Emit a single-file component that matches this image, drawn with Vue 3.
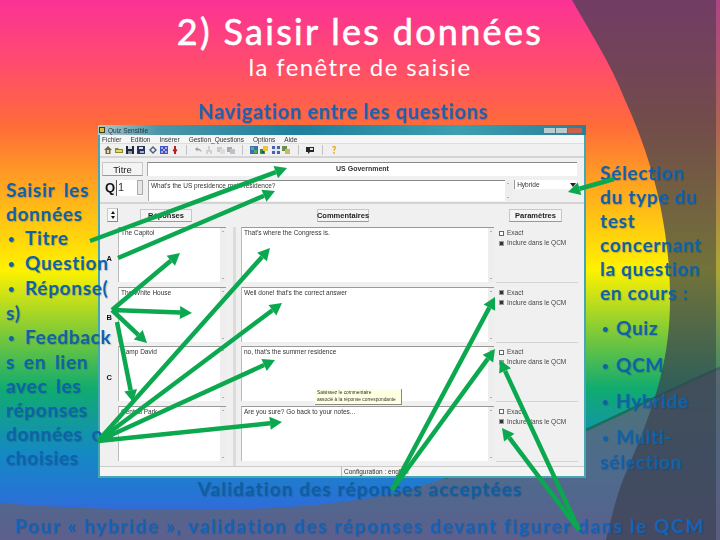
<script setup>
const rows = [
  { letter: 'A', answer: 'The Capitol', comment: "That's where the Congress is.", exact: false, qcm: 'on' },
  { letter: 'B', answer: 'The White House', comment: "Well done! that's the correct answer", exact: true, qcm: 'on' },
  { letter: 'C', answer: 'Camp David', comment: "no, that's the summer residence", exact: false, qcm: 'grey' },
  { letter: '', answer: 'Central Park', comment: 'Are you sure? Go back to your notes...', exact: false, qcm: 'on' }
]
const menu = ['Fichier', 'Edition', 'Insérer', 'Gestion_Questions', 'Options', 'Aide']
const tools = [
  { parts: [['M4 0L8 4H6.5V8H1.5V4H0Z', '#6f6a45'], ['M3 4H5V7H3Z', '#e8dca0']], gap: 3 },
  { parts: [['M0 2H3L4 3H8V7H0Z', '#8a8a30'], ['M1 4H7V6H1Z', '#e6d860']], gap: 3 },
  { parts: [['M0 0H8V8H0Z', '#20283c'], ['M2 0H6V3H2Z', '#dfe3ea'], ['M2 5H6V8H2Z', '#8a92a6']], gap: 3 },
  { parts: [['M0 0H8V8H0Z', '#28345e'], ['M2 1H6V3H2Z', '#dfe3ea'], ['M3 5H7V7H3Z', '#a4b0d8']], gap: 4 },
  { parts: [['M4 0L8 4L4 8L0 4Z', '#55607a'], ['M4 2L6 4L4 6L2 4Z', '#f0f0f0']], gap: 3 },
  { parts: [['M0 0H8V8H0Z', '#3f56c0'], ['M1 1H3V3H1ZM5 1H7V3H5ZM3 3H5V5H3ZM1 5H3V7H1ZM5 5H7V7H5Z', '#b0a8e0']], gap: 3 },
  { parts: [['M3 0H5V3L6.5 4L5 6V8H3V6L1.5 4L3 3Z', '#b8201c']], gap: 7, sep: true },
  { parts: [['M1 3L3.5 1V2.4C6 2.4 7.5 3.6 7.5 6.5C6.6 4.8 5.4 4 3.5 4V5.4Z', '#9a9ea6']], gap: 3 },
  { parts: [['M3 0H5V4H7V8H5V6H3V8H1V4H3Z', '#d0d2d6']], gap: 4 },
  { parts: [['M0 1H5V6H0Z', '#c8cacd'], ['M3 3H8V8H3Z', '#dcdde0']], gap: 2 },
  { parts: [['M0 1H5V6H0Z', '#a6a9ad'], ['M3 3H8V8H3Z', '#bdc0c4']], gap: 7, sep: true },
  { parts: [['M0 0H8V8H0Z', '#3a6fb8'], ['M1 1H4V4H1Z', '#58b080'], ['M4 4H7V7H4Z', '#5aa860']], gap: 2 },
  { parts: [['M0 3H5V8H0Z', '#3a8c3c'], ['M3 0H8V5H3Z', '#e6c840'], ['M2 5H4V7H2Z', '#1e4a8c']], gap: 4 },
  { parts: [['M0 0H8V8H0Z', '#4664b0'], ['M3 0H5V8H3ZM0 3H8V5H0Z', '#dfe6f2']], gap: 2 },
  { parts: [['M0 0H5V5H0Z', '#6a8e4c'], ['M3 3H8V8H3Z', '#c8b868']], gap: 8, sep: true },
  { parts: [['M0 1H8V6H4L2 8V6H0Z', '#24262c'], ['M4 2H7V4H4Z', '#e4e4e4']], gap: 8, sep: true },
  { parts: [['M2 1.5C2 -0.5 6 -0.5 6 1.5C6 3.2 4.6 3.2 4.6 5H3.4C3.4 2.8 4.8 2.8 4.8 1.6C4.8 0.8 3.2 0.8 3.2 1.6ZM3.4 6H4.6V8H3.4Z', '#e8a010']], gap: 0 }
]
function arrow(x1, y1, x2, y2, head = 12, half = 6.5) {
  const d = Math.hypot(x2 - x1, y2 - y1)
  const ux = (x2 - x1) / d
  const uy = (y2 - y1) / d
  const bx = x2 - ux * head
  const by = y2 - uy * head
  const px = -uy * half
  const py = ux * half
  return {
    line: { x1, y1, x2: bx, y2: by },
    head: `${x2},${y2} ${bx + px},${by + py} ${bx - px},${by - py}`
  }
}
const arrows = [
  [90, 241, 287, 168], [118, 258, 275, 191], [112, 310, 180, 253], [112, 310, 192, 313], [112, 310, 147, 343],
  [117, 322, 133, 402], [98, 441, 270, 248], [98, 441, 282, 303], [98, 441, 275, 360], [98, 441, 282, 422],
  [614, 179, 568, 192], [392, 490, 495, 297], [392, 490, 495, 349], [579, 530, 500, 360], [579, 530, 502, 428]
].map((a) => arrow(...a))
</script>

<template>
  <div class="slide">
    <svg class="bg" viewBox="0 0 720 540" aria-hidden="true">
      <path d="M0 503 C90 510 170 511 250 509 C340 506 400 495 445 478 L586 430 C630 410 680 385 720 368 L720 540 L0 540 Z" fill="#5d6478" fill-opacity="0.78" />
      <path d="M445 478 L586 430 C630 410 680 385 720 368" fill="none" stroke="#17705c" stroke-width="2.5" />
      <path d="M572 0 C590 32 610 62 625 100 C650 155 668 215 670 290 C671 350 660 395 627 470 C618 490 612 515 606 540 L716 540 L716 0 Z" fill="#3c4150" fill-opacity="0.72" />
      <rect x="716" y="0" width="4" height="540" fill="#5a5a70" fill-opacity="0.5" />
    </svg>

    <header class="head">
      <h1>2) Saisir les données</h1>
      <h2>la fenêtre de saisie</h2>
      <p class="nav-label blue">Navigation entre les questions</p>
    </header>

    <main class="middle">
      <div class="left blue">
        <p>Saisir les<br />données</p>
        <p><span class="dot">•</span>Titre</p>
        <p><span class="dot">•</span>Question</p>
        <p><span class="dot">•</span>Réponse(<br />s)</p>
        <p><span class="dot">•</span>Feedback<br />s en lien<br />avec les<br />réponses<br />données ou<br />choisies</p>
      </div>

      <section class="win">
        <div class="titlebar">
          <span class="app-icon"></span>
          <span class="win-name">Quiz Sensible</span>
          <span class="win-ctrl"><i></i><i></i><i class="close"></i></span>
        </div>
        <div class="menu"><span v-for="m in menu" :key="m">{{ m }}</span></div>
        <div class="toolbar">
          <template v-for="(t, i) in tools" :key="i">
            <svg class="tool" viewBox="0 0 8 8" :style="{ marginRight: t.gap + 'px' }" aria-hidden="true">
              <path v-for="p in t.parts" :key="p[0]" :d="p[0]" :fill="p[1]" />
            </svg>
            <span v-if="t.sep" class="tool-sep"></span>
          </template>
        </div>

        <div class="meta">
          <div class="meta-row">
            <span class="tab titre">Titre</span>
            <div class="field title-field">US Government</div>
          </div>
          <div class="meta-row q-row">
            <span class="q">Q</span>
            <span class="spin"><span>1</span><i class="spin-btn"></i></span>
            <div class="field q-field">What's the US presidence main residence?</div>
            <span class="sb q-sb"></span>
            <div class="select">Hybride<b></b></div>
          </div>
        </div>

        <div class="tabs">
          <span class="updown"><i class="up"></i><i class="down"></i></span>
          <span class="tab t-rep">Réponses</span>
          <span class="tab t-com">Commentaires</span>
          <span class="tab t-par">Paramètres</span>
        </div>

        <div class="rows">
          <div v-for="r in rows" :key="r.answer" class="row">
            <span class="letter">{{ r.letter }}</span>
            <div class="box">{{ r.answer }}<span class="sb"></span></div>
            <span class="divider"></span>
            <div class="box">{{ r.comment }}<span class="sb"></span></div>
            <div class="params">
              <label><i class="check" :class="{ on: r.exact }"></i>Exact</label>
              <label><i class="check" :class="{ on: r.qcm === 'on', grey: r.qcm === 'grey' }"></i>Inclure dans le QCM</label>
            </div>
          </div>
          <div class="tip">Saisissez le commentaire<br />associé à la réponse correspondante</div>
        </div>

        <div class="status"><span>Configuration : english</span></div>
      </section>

      <div class="right blue">
        <p>Sélection<br />du type du<br />test<br />concernant<br />la question<br />en cours :</p>
        <p class="item"><span class="dot">•</span>Quiz</p>
        <p class="item"><span class="dot">•</span>QCM</p>
        <p class="item"><span class="dot">•</span>Hybride</p>
        <p class="item"><span class="dot">•</span>Multi-<br />sélection</p>
      </div>
    </main>

    <p class="validation blue">Validation des réponses acceptées</p>
    <p class="foot blue">Pour « hybride », validation des réponses devant figurer dans le QCM</p>

    <svg class="arrows" viewBox="0 0 720 540" aria-hidden="true">
      <g v-for="(a, i) in arrows" :key="i">
        <line v-bind="a.line" stroke="#0ba850" stroke-width="4.5" />
        <polygon :points="a.head" fill="#0ba850" />
      </g>
    </svg>
  </div>
</template>

<style>
html, body { margin: 0; }
</style>

<style scoped>
.slide {
  position: relative;
  width: 720px;
  height: 540px;
  overflow: hidden;
  display: flex;
  flex-direction: column;
  font-family: Lato, "Open Sans", sans-serif;
  background: linear-gradient(180deg, #fb3296 0%, #ff4a70 11%, #ff6a3a 23%, #ffae1c 36%, #fff200 50%, #86cc34 61%, #10ab70 72%, #1489c4 84%, #2a70d8 93%, #5a50d0 100%);
}
.bg, .arrows { position: absolute; inset: 0; width: 720px; height: 540px; }
.arrows { z-index: 5; pointer-events: none; }
.head, .middle, .validation, .foot { position: relative; }
p, h1, h2 { margin: 0; }
.blue {
  font-weight: 700;
  color: #0f62a8;
  text-shadow: 1px 1px 1px rgba(20, 50, 90, 0.25);
}
.dot { display: inline-block; font-size: 11px; vertical-align: 2px; }
.head { height: 125px; text-align: center; color: #fff; flex: none; }
h1 { padding-top: 9px; font-size: 36px; line-height: 44px; font-weight: 400; letter-spacing: 2.3px; -webkit-text-stroke: 0.6px #fff; }
h2 { font-size: 24px; line-height: 28px; font-weight: 400; letter-spacing: 1.4px; }
.nav-label { font-size: 20px; line-height: 24px; padding-top: 18px; padding-right: 34px; letter-spacing: 0.7px; color: #1e63b0; }

.middle { display: flex; height: 353px; flex: none; }
.left {
  width: 92px;
  margin-left: 6px;
  padding-top: 53px;
  position: relative;
  z-index: 3;
}
.left p, .right p { font-size: 19px; line-height: 24px; letter-spacing: 0.7px; white-space: nowrap; }
.left p { width: 108px; word-spacing: 3.5px; }
.left .dot { width: 19px; padding-left: 2px; box-sizing: border-box; }
.right { width: 108px; margin-left: 14px; padding-top: 36px; }
.right .item { margin-top: 11.3px; }
.right .dot { width: 16px; padding-left: 2px; box-sizing: border-box; }

.win {
  width: 488px;
  height: 353px;
  box-sizing: border-box;
  border: 2px solid #45a6b4;
  border-top: 0;
  background: #f0f0f0;
  font-family: "Liberation Sans", sans-serif;
  font-size: 6.5px;
  color: #333;
  display: flex;
  flex-direction: column;
  filter: blur(0.35px);
  position: relative;
  z-index: 1;
}
.win * { box-sizing: border-box; }
.titlebar {
  height: 10px;
  flex: none;
  margin: 0 -2px;
  display: flex;
  align-items: center;
  gap: 3px;
  padding: 0 4px 0 1px;
  background: linear-gradient(90deg, #b0c8cc 0, #4b96a8 60px, #1f7f9c 200px, #3e9fb0 360px, #2a7f98 488px);
  color: #20383f;
}
.app-icon { width: 6px; height: 6px; background: #d8c030; border: 1px solid #3a3a20; }
.win-ctrl { margin-left: auto; display: flex; gap: 1px; }
.win-ctrl i { width: 11px; height: 5px; background: #b9ccd0; }
.win-ctrl .close { width: 14px; background: #c8604a; }
.menu { height: 9px; flex: none; display: flex; gap: 9px; padding: 1px 0 0 2px; background: #f6f6f6; border-bottom: 1px solid #ddd; line-height: 7px; }
.toolbar { height: 14px; flex: none; display: flex; align-items: center; padding-left: 4px; border-bottom: 2px solid #d4d4d4; }
.tool { width: 8px; height: 8px; flex: none; }
.tool-sep { width: 1px; height: 10px; margin-right: 7px; background: #c4c4c4; flex: none; }

.meta { height: 46px; flex: none; padding: 4px 7px 0 2px; border-bottom: 2px solid #d4d4d4; }
.meta-row { display: flex; height: 14px; }
.q-row { height: 21px; margin-top: 4px; align-items: flex-start; }
.tab {
  height: 13px;
  display: flex;
  align-items: center;
  justify-content: center;
  background: #f4f4f4;
  border: 1px solid #c8c8c8;
  border-bottom-color: #999;
  font-weight: 700;
  font-size: 7.5px;
  color: #222;
}
.titre { width: 41px; height: 14px; font-size: 9.5px; font-weight: 400; margin-right: 4px; }
.field { background: #fff; border-top: 1px solid #888; border-left: 1px solid #aaa; position: relative; }
.title-field { width: 430px; text-align: center; font-weight: 700; font-size: 7px; line-height: 11px; }
.q { width: 10px; margin-left: 3px; margin-right: 1px; font-weight: 700; font-size: 13px; line-height: 16px; color: #111; }
.spin { width: 27px; height: 16px; background: #fff; border-left: 1px solid #555; font-size: 11px; line-height: 15px; padding-left: 1px; display: flex; justify-content: space-between; margin-right: 5px; }
.spin-btn { width: 6px; height: 15px; background: #e6e6e6; border: 1px solid #aaa; }
.q-field { width: 358px; height: 21px; padding: 1px 2px; }
.select { width: 63px; height: 9px; margin-left: 2px; background: #fff; border-left: 1px solid #999; padding-left: 2px; line-height: 9px; position: relative; }
.select b { position: absolute; right: 1px; top: 3px; border: 3px solid transparent; border-top: 4px solid #222; }

.tabs { height: 23px; flex: none; position: relative; display: flex; align-items: flex-start; padding-top: 5px; }
.updown { margin-left: 7px; width: 11px; height: 14px; background: #f8f8f8; border: 1px solid #ccc; border-bottom-color: #888; border-right-color: #888; display: flex; flex-direction: column; align-items: center; justify-content: center; gap: 2px; margin-top: -1px; }
.updown i { width: 0; height: 0; border: 2px solid transparent; }
.updown .up { border-bottom: 3px solid #111; border-top: 0; }
.updown .down { border-top: 3px solid #111; border-bottom: 0; }
.t-rep { width: 52px; margin-left: 22px; }
.t-com { width: 52px; margin-left: 125px; }
.t-par { width: 53px; margin-left: 140px; }

.rows { position: relative; flex: none; height: 238px; }
.row { display: grid; grid-template-columns: 18px 108px 15px 253px 84px; height: 56px; margin-bottom: 3.5px; }
.letter { font-weight: 700; font-size: 7.5px; color: #111; display: flex; align-items: center; justify-content: flex-end; padding-right: 6px; padding-top: 2px; }
.box { position: relative; background: #fff; border-top: 1px solid #999; border-left: 1px solid #bbb; padding: 1px 2px; height: 55px; white-space: nowrap; overflow: hidden; }
.sb { position: absolute; right: 0; top: 0; bottom: 0; width: 6px; background: #eee; }
.sb::before, .sb::after { content: ""; position: absolute; left: 2px; border: 1.5px solid transparent; }
.sb::before { top: 3px; border-bottom-color: #777; border-top: 0; }
.sb::after { bottom: 3px; border-top-color: #777; border-bottom: 0; }
.q-sb { position: relative; width: 7px; height: 21px; flex: none; }
.divider { width: 3px; height: 60px; margin-left: 7px; background: #dcdcdc; }
.params { margin-left: 2px; padding: 3px 0 0 3px; border-bottom: 1px solid #d4d4d4; height: 56px; display: flex; flex-direction: column; gap: 4px; }
.params label { display: flex; align-items: center; gap: 3px; line-height: 6px; color: #444; }
.check { width: 5px; height: 5px; background: #fff; border: 1px solid #666; }
.check.on { background: #333; border-color: #999; }
.check.grey { background: #7fae8a; border-color: #999; }
.tip {
  position: absolute;
  left: 215px;
  top: 162px;
  width: 87px;
  height: 16px;
  padding: 1px 2px;
  background: #ffffe1;
  border-right: 1px solid #888;
  border-bottom: 1px solid #888;
  font-size: 4.8px;
  line-height: 6.5px;
  white-space: nowrap;
}
.status { height: 10px; flex: none; margin-top: auto; border-top: 1px solid #ccc; padding-left: 241px; background: #f4f4f4; line-height: 9px; }
.status span { display: block; border-left: 1px solid #bbb; padding-left: 2px; font-size: 6.5px; }

.validation { height: 22px; text-align: center; font-size: 19px; line-height: 22px; letter-spacing: 1.1px; color: #0f5ea0; }
.foot { margin-top: 15px; text-align: center; font-size: 19px; line-height: 22px; letter-spacing: 1.65px; white-space: nowrap; color: #1463b8; }
</style>
